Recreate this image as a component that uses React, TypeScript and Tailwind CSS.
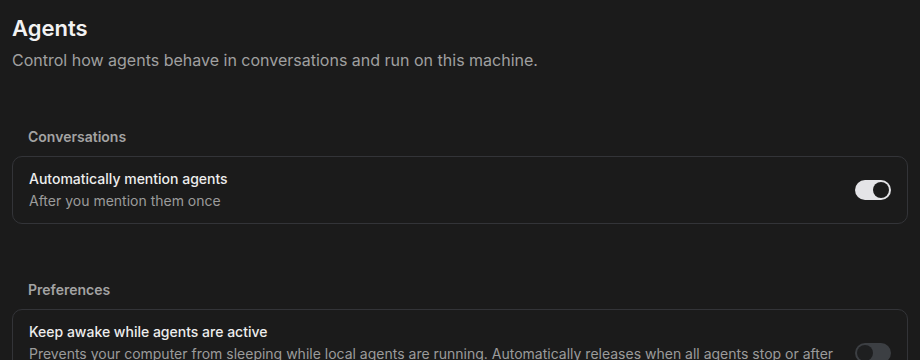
import { useState } from "react";

interface ToggleProps {
  on: boolean;
  onClick: () => void;
}

const Toggle = ({ on, onClick }: ToggleProps) => {
  return (
    <button
      onClick={onClick}
      className={
        on
          ? "relative w-9 h-5 shrink-0 rounded-full bg-[#e4e4e7]"
          : "relative w-9 h-5 shrink-0 rounded-full bg-[#3c3f43]"
      }
    >
      <span
        className={
          on
            ? "absolute top-0.5 right-0.5 w-4 h-4 rounded-full bg-[#1b1b1b]"
            : "absolute top-0.5 left-0.5 w-4 h-4 rounded-full bg-[#1e1f20]"
        }
      />
    </button>
  );
};

interface RowProps {
  title: string;
  desc: string;
  on: boolean;
  onClick: () => void;
}

const SettingRow = ({ title, desc, on, onClick }: RowProps) => {
  return (
    <div className="flex items-center gap-5 rounded-[10px] border border-[#333438] px-4 py-3">
      <div className="flex flex-col gap-0.5 flex-1">
        <span className="text-sm leading-5 font-medium text-[#ededed]">
          {title}
        </span>
        <span className="text-sm leading-5 text-[#9b9b9b]">{desc}</span>
      </div>
      <Toggle on={on} onClick={onClick} />
    </div>
  );
};

const Section = ({
  label,
  children,
}: {
  label: string;
  children: React.ReactNode;
}) => {
  return (
    <div className="flex flex-col">
      <span className="px-4 mb-[9px] text-sm leading-5 font-semibold text-[#a3a3a3]">
        {label}
      </span>
      {children}
    </div>
  );
};

export default function App() {
  const [mention, setMention] = useState(true);
  const [awake, setAwake] = useState(false);

  return (
    <div
      className="min-h-screen bg-[#1b1b1b] px-3 pt-3"
      style={{ fontFamily: "Inter, 'Noto Sans', sans-serif" }}
    >
      <h1 className="text-[22px] leading-8 font-semibold text-[#f2f2f2]">
        Agents
      </h1>
      <p className="mt-1 text-base leading-6 text-[#a0a0a0]">
        Control how agents behave in conversations and run on this machine.
      </p>

      <div className="mt-[55px] flex flex-col gap-[56px]">
        <Section label="Conversations">
          <SettingRow
            title="Automatically mention agents"
            desc="After you mention them once"
            on={mention}
            onClick={() => setMention(!mention)}
          />
        </Section>
        <Section label="Preferences">
          <SettingRow
            title="Keep awake while agents are active"
            desc="Prevents your computer from sleeping while local agents are running. Automatically releases when all agents stop or after 30 minutes of inactivity."
            on={awake}
            onClick={() => setAwake(!awake)}
          />
        </Section>
      </div>
    </div>
  );
}
